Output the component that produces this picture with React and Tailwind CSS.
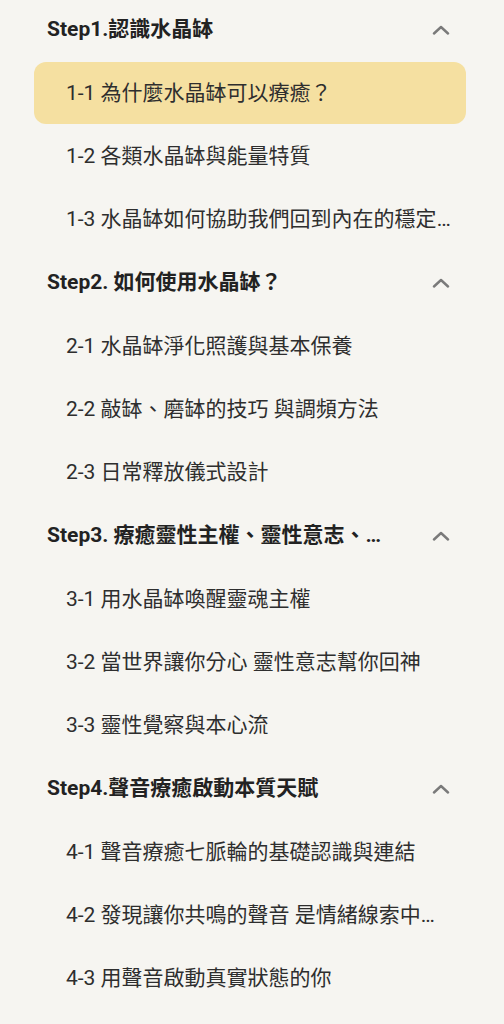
const sections = [
  {
    title: "Step1.認識水晶缽",
    items: [
      "1-1 為什麼水晶缽可以療癒？",
      "1-2 各類水晶缽與能量特質",
      "1-3 水晶缽如何協助我們回到內在的穩定與平衡",
    ],
  },
  {
    title: "Step2. 如何使用水晶缽？",
    items: [
      "2-1 水晶缽淨化照護與基本保養",
      "2-2 敲缽、磨缽的技巧 與調頻方法",
      "2-3 日常釋放儀式設計",
    ],
  },
  {
    title: "Step3. 療癒靈性主權、靈性意志、靈性覺察",
    items: [
      "3-1 用水晶缽喚醒靈魂主權",
      "3-2 當世界讓你分心 靈性意志幫你回神",
      "3-3 靈性覺察與本心流",
    ],
  },
  {
    title: "Step4.聲音療癒啟動本質天賦",
    items: [
      "4-1 聲音療癒七脈輪的基礎認識與連結",
      "4-2 發現讓你共鳴的聲音 是情緒線索中的指引",
      "4-3 用聲音啟動真實狀態的你",
    ],
  },
];

function Chevron() {
  return (
    <svg width="18" height="10" viewBox="0 0 18 10" className="shrink-0">
      <polyline
        points="2,8.5 9,2 16,8.5"
        fill="none"
        stroke="#7a7a7a"
        strokeWidth="2.4"
        strokeLinecap="round"
        strokeLinejoin="round"
      />
    </svg>
  );
}

export default function App() {
  const active = "1-1 為什麼水晶缽可以療癒？";
  return (
    <div
      className="min-h-screen bg-[#f6f5f1] overflow-hidden"
      style={{ fontFamily: 'Roboto, "Noto Sans CJK TC", sans-serif' }}
    >
      <div className="-mt-[1.6px] pl-[34px] pr-[38px]">
        {sections.map((s) => (
          <div key={s.title}>
            <div className="h-[63.27px] flex items-center pl-[13px] pr-[16px] gap-10">
              <h3 className="flex-1 min-w-0 truncate font-bold text-[21px] text-[#222]">
                {s.title}
              </h3>
              <Chevron />
            </div>
            {s.items.map((it) => (
              <div key={it} className="h-[63.27px] flex items-center">
                <div
                  className={`h-[62px] w-full flex items-center rounded-xl pl-8 pr-3 ${
                    it === active ? "bg-[#f5e0a1]" : ""
                  }`}
                >
                  <span className="truncate text-[21px] text-[#2e2e2e]">{it}</span>
                </div>
              </div>
            ))}
          </div>
        ))}
      </div>
    </div>
  );
}
